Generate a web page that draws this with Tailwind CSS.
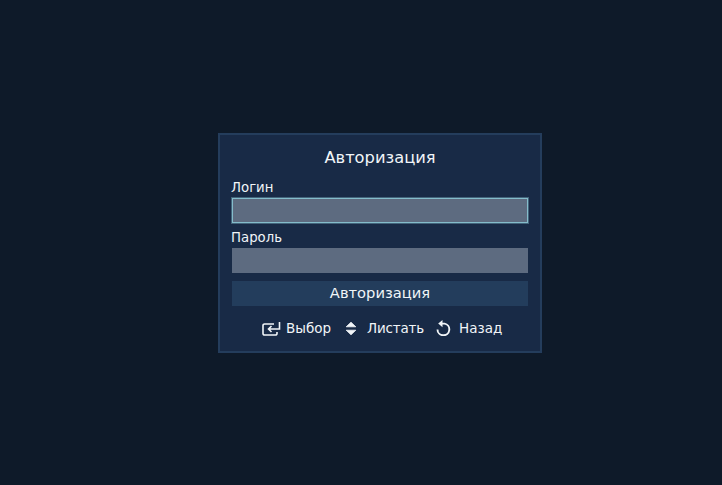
<!DOCTYPE html>
<html lang="ru">
<head>
<meta charset="UTF-8">
<title>Авторизация</title>
<script src="https://cdn.jsdelivr.net/npm/@tailwindcss/browser@4"></script>
</head>
<body class="bg-[#0e1a29] text-[#f1f5f8] font-['DejaVu_Sans',sans-serif] w-[722px] h-[485px] overflow-hidden">
  <div class="pt-[133px] pl-[218px]">
    <div class="w-[324px] h-[220px] bg-[#182a46] border-2 border-[#243d5c] px-[12px]">
      <h1 class="text-[16.3px] leading-[20px] text-center pt-[13px]">Авторизация</h1>
      <div class="text-[13.3px] leading-[18px] mt-[11px] -ml-[1px]">Логин</div>
      <div class="h-[25px] mt-[1px] bg-[#5d6b80] border border-[#84bccb] ring-1 ring-[#84bccb]/40"></div>
      <div class="text-[13.3px] leading-[18px] mt-[6px] -ml-[1px]">Пароль</div>
      <div class="h-[25px] mt-[1px] bg-[#5d6b80]"></div>
      <div class="h-[25px] mt-[8px] bg-[#233d5c] flex items-center justify-center text-[14.7px]">Авторизация</div>
      <div class="flex items-center mt-[10px] pl-[30px] text-[13.5px] leading-[24px]">
        <svg class="w-[19px] h-[15px] mr-[5px]" viewBox="0 0 19 15" fill="none" stroke="#f1f5f8" stroke-width="1.6">
          <path d="M12 3H2.5a1.5 1.5 0 0 0-1.5 1.5v8A1.5 1.5 0 0 0 2.5 14h11a1.5 1.5 0 0 0 1.5-1.5V11"/>
          <path d="M17.5 1v7H6.5M9.5 5l-3 3 3 3"/>
        </svg>
        <span>Выбор</span>
        <svg class="w-[12px] h-[15px] ml-[14px] mr-[10px]" viewBox="0 0 12 15" fill="#f1f5f8" stroke="#f1f5f8" stroke-width="0.8" stroke-linejoin="round">
          <path d="M6 1.2l4.8 4.6H1.2zM1.2 9.2h9.6L6 13.8z"/>
        </svg>
        <span class="w-[56px] whitespace-nowrap tracking-[-0.2px]">Листать</span>
        <svg class="w-[16px] h-[16px] ml-[13px] mr-[7px]" viewBox="0 0 16 16" fill="none" stroke="#f1f5f8" stroke-width="1.9">
          <path d="M5 3.6H8.5a5.9 5.9 0 1 1-7 5.8"/>
          <path d="M6.5 0L2.2 3.6 6.5 7.2z" fill="#f1f5f8" stroke="none"/>
        </svg>
        <span>Назад</span>
      </div>
    </div>
  </div>
</body>
</html>
